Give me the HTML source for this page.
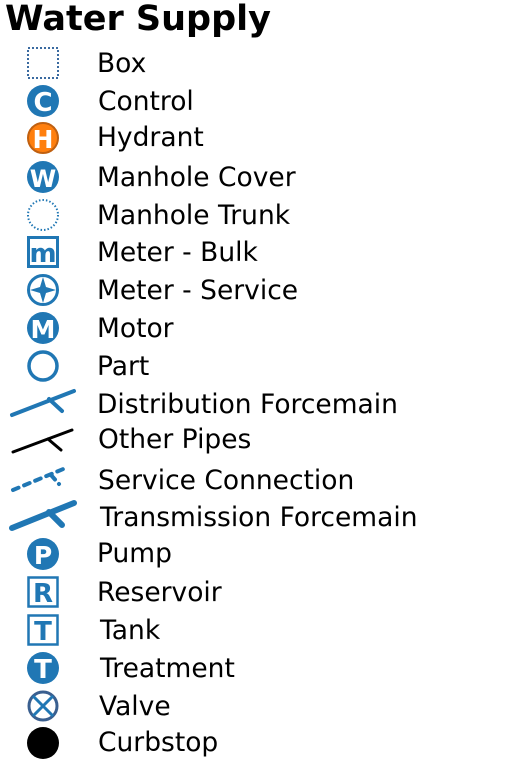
<!DOCTYPE html>
<html><head><meta charset="utf-8"><style>
body{margin:0;width:507px;height:765px;background:#fff;position:relative;overflow:hidden;font-family:"DejaVu Sans","Liberation Sans",sans-serif;}
.t{position:absolute;font-size:26.5px;color:#000;line-height:1;white-space:nowrap;transform:translateY(-50%);}
h1{position:absolute;left:5px;top:2px;margin:0;font-size:35px;font-weight:bold;line-height:1;}
svg{position:absolute;left:0;top:0}
</style></head><body>
<h1>Water Supply</h1>
<svg width="507" height="765" font-family="DejaVu Sans,sans-serif" font-weight="bold" text-anchor="middle">
<rect x="28" y="48" width="30" height="30" fill="none" stroke="#3a6aa0" stroke-width="2" stroke-dasharray="2,2"/>
<circle cx="43" cy="101" r="16" fill="#2077b4"/><text x="43" y="111" font-size="26" fill="#fff">C</text>
<circle cx="43" cy="138" r="15" fill="#ff7f0e" stroke="#c06010" stroke-width="2"/><text x="43" y="148" font-size="25" fill="#fff">H</text>
<circle cx="43" cy="177" r="16" fill="#2077b4"/><text x="43" y="187" font-size="24" fill="#fff">W</text>
<circle cx="43" cy="215" r="15" fill="none" stroke="#2077b4" stroke-width="2" stroke-dasharray="1.5,2"/>
<rect x="28.5" y="237.5" width="29" height="29" fill="#fff" stroke="#2077b4" stroke-width="3"/><text x="43" y="262" font-size="26" fill="#2077b4">m</text>
<circle cx="43" cy="290" r="14.5" fill="none" stroke="#2077b4" stroke-width="3"/><path d="M43 277 L46 287 L56 290 L46 293 L43 303 L40 293 L30 290 L40 287Z" fill="#2077b4"/>
<circle cx="43" cy="328" r="16" fill="#2077b4"/><text x="43" y="338" font-size="25" fill="#fff">M</text>
<circle cx="43" cy="366" r="14" fill="none" stroke="#2077b4" stroke-width="3.5"/>
<g fill="none" stroke-linecap="round">
<path d="M12 415 L74 391 M49 399 L62 411" stroke="#2077b4" stroke-width="4"/>
<path d="M13 452 L72 430 M48 439 L61 450" stroke="#000" stroke-width="3"/>
<path d="M13 490 L68 467 M51 475 L59 484" stroke="#2077b4" stroke-width="4" stroke-dasharray="6,6"/>
<path d="M12 528 L74 503 M49 512 L62 525" stroke="#2077b4" stroke-width="6"/>
</g>
<circle cx="43" cy="554" r="16" fill="#2077b4"/><text x="43" y="564" font-size="25" fill="#fff">P</text>
<rect x="28.5" y="577.5" width="29" height="29" fill="#fff" stroke="#2077b4" stroke-width="2.5"/><text x="43" y="602" font-size="26" fill="#2077b4">R</text>
<rect x="28.5" y="615.5" width="29" height="29" fill="#fff" stroke="#2077b4" stroke-width="2.5"/><text x="43" y="640" font-size="26" fill="#2077b4">T</text>
<circle cx="43" cy="668" r="16" fill="#2077b4"/><text x="43" y="678" font-size="26" fill="#fff">T</text>
<circle cx="43" cy="706" r="14" fill="none" stroke="#3a5f8f" stroke-width="3"/><path d="M33 696 L53 716 M53 696 L33 716" stroke="#2077b4" stroke-width="3"/>
<circle cx="43" cy="743" r="16" fill="#000"/>
</svg>
<div class="t" style="left:97px;top:64px">Box</div>
<div class="t" style="left:98px;top:102px">Control</div>
<div class="t" style="left:97px;top:138px">Hydrant</div>
<div class="t" style="left:97px;top:178px">Manhole Cover</div>
<div class="t" style="left:97px;top:216px">Manhole Trunk</div>
<div class="t" style="left:97px;top:253px">Meter - Bulk</div>
<div class="t" style="left:97px;top:291px">Meter - Service</div>
<div class="t" style="left:97px;top:329px">Motor</div>
<div class="t" style="left:97px;top:367px">Part</div>
<div class="t" style="left:97px;top:405px">Distribution Forcemain</div>
<div class="t" style="left:98px;top:440px">Other Pipes</div>
<div class="t" style="left:98px;top:481px">Service Connection</div>
<div class="t" style="left:100px;top:518px">Transmission Forcemain</div>
<div class="t" style="left:97px;top:554px">Pump</div>
<div class="t" style="left:97px;top:593px">Reservoir</div>
<div class="t" style="left:100px;top:631px">Tank</div>
<div class="t" style="left:100px;top:669px">Treatment</div>
<div class="t" style="left:99px;top:707px">Valve</div>
<div class="t" style="left:98px;top:743px">Curbstop</div>
</body></html>
